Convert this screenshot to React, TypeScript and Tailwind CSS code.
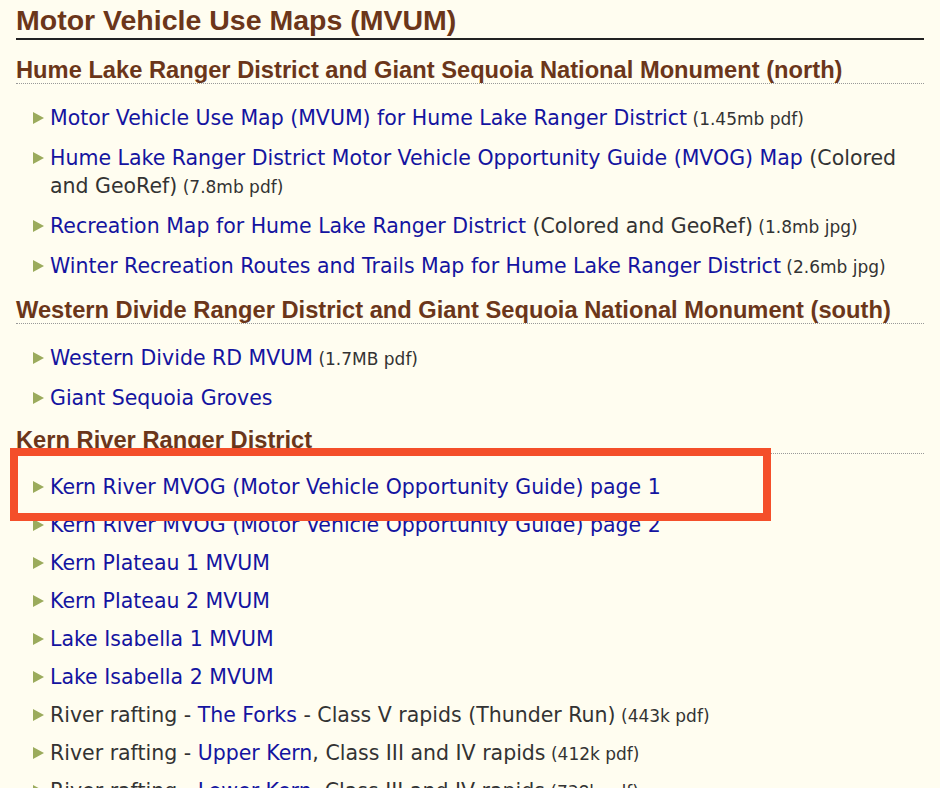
import React from 'react'

type Part = { text: string; kind?: 'link' | 'plain' | 'size' }

const sections: { title: string; items: Part[][]; tight?: boolean }[] = [
  {
    title: 'Hume Lake Ranger District and Giant Sequoia National Monument (north)',
    items: [
      [{ text: 'Motor Vehicle Use Map (MVUM) for Hume Lake Ranger District', kind: 'link' }, { text: ' (1.45mb pdf)', kind: 'size' }],
      [
        { text: 'Hume Lake Ranger District Motor Vehicle Opportunity Guide (MVOG) Map', kind: 'link' },
        { text: ' (Colored and GeoRef)', kind: 'plain' },
        { text: ' (7.8mb pdf)', kind: 'size' },
      ],
      [
        { text: 'Recreation Map for Hume Lake Ranger District', kind: 'link' },
        { text: ' (Colored and GeoRef)', kind: 'plain' },
        { text: ' (1.8mb jpg)', kind: 'size' },
      ],
      [
        { text: 'Winter Recreation Routes and Trails Map for Hume Lake Ranger District', kind: 'link' },
        { text: ' (2.6mb jpg)', kind: 'size' },
      ],
    ],
  },
  {
    title: 'Western Divide Ranger District and Giant Sequoia National Monument (south)',
    items: [
      [{ text: 'Western Divide RD MVUM', kind: 'link' }, { text: ' (1.7MB pdf)', kind: 'size' }],
      [{ text: 'Giant Sequoia Groves', kind: 'link' }],
    ],
  },
  {
    title: 'Kern River Ranger District',
    tight: true,
    items: [
      [{ text: 'Kern River MVOG (Motor Vehicle Opportunity Guide) page 1', kind: 'link' }],
      [{ text: 'Kern River MVOG (Motor Vehicle Opportunity Guide) page 2', kind: 'link' }],
      [{ text: 'Kern Plateau 1 MVUM', kind: 'link' }],
      [{ text: 'Kern Plateau 2 MVUM', kind: 'link' }],
      [{ text: 'Lake Isabella 1 MVUM', kind: 'link' }],
      [{ text: 'Lake Isabella 2 MVUM', kind: 'link' }],
      [
        { text: 'River rafting - ', kind: 'plain' },
        { text: 'The Forks', kind: 'link' },
        { text: ' - Class V rapids (Thunder Run)', kind: 'plain' },
        { text: ' (443k pdf)', kind: 'size' },
      ],
      [
        { text: 'River rafting - ', kind: 'plain' },
        { text: 'Upper Kern', kind: 'link' },
        { text: ', Class III and IV rapids', kind: 'plain' },
        { text: ' (412k pdf)', kind: 'size' },
      ],
      [
        { text: 'River rafting - ', kind: 'plain' },
        { text: 'Lower Kern', kind: 'link' },
        { text: ', Class III and IV rapids', kind: 'plain' },
        { text: ' (738k pdf)', kind: 'size' },
      ],
    ],
  },
]

function Bullet() {
  return (
    <svg width="11" height="12" viewBox="0 0 11 12" className="mt-[8px] shrink-0">
      <path d="M0 0 L11 6 L0 12 Z" fill="#9bab5c" />
    </svg>
  )
}

function Item({ parts }: { parts: Part[] }) {
  return (
    <li className="flex pl-[17px]">
      <Bullet />
      <div className="pl-[6px]">
        {parts.map((p, i) =>
          p.kind === 'link' ? (
            <a key={i} className="text-[#1414a0]">{p.text}</a>
          ) : p.kind === 'size' ? (
            <span key={i} className="text-[17px] leading-none text-[#333]">{p.text}</span>
          ) : (
            <span key={i} className="text-[#333]">{p.text}</span>
          )
        )}
      </div>
    </li>
  )
}

export default function App() {
  return (
    <div className="relative h-[788px] w-[940px] overflow-hidden bg-[#fffdf0]">
      <div className="w-[924px] pl-[16px] pt-[5px]">
        {/* page title */}
        <h1 className="border-b-2 border-[#222] pb-[2px] font-['Liberation_Sans',sans-serif] text-[28.5px] font-bold leading-[31px] text-[#6b361a]">
          Motor Vehicle Use Maps (MVUM)
        </h1>

        {sections.map((s) => (
          <div key={s.title}>
            <h2
              className={`border-b border-dotted border-[#999] font-['Liberation_Sans',sans-serif] text-[23.7px] font-bold leading-[26px] text-[#6b361a] ${
                s.tight ? 'mt-[15px]' : 'mt-[17px]'
              }`}
            >
              {s.title}
            </h2>
            <ul
              className={`flex flex-col font-['DejaVu_Sans',Verdana,sans-serif] text-[20.5px] leading-[28px] ${
                s.tight ? 'mt-[19px] gap-[10px]' : 'mt-[20px] gap-[12px]'
              }`}
            >
              {s.items.map((parts, i) => (
                <Item key={i} parts={parts} />
              ))}
            </ul>
          </div>
        ))}
      </div>

      {/* highlight box */}
      <div className="absolute left-[10px] top-[448px] h-[73px] w-[761px] border-[8px] border-[#f44f2a]" />
    </div>
  )
}
